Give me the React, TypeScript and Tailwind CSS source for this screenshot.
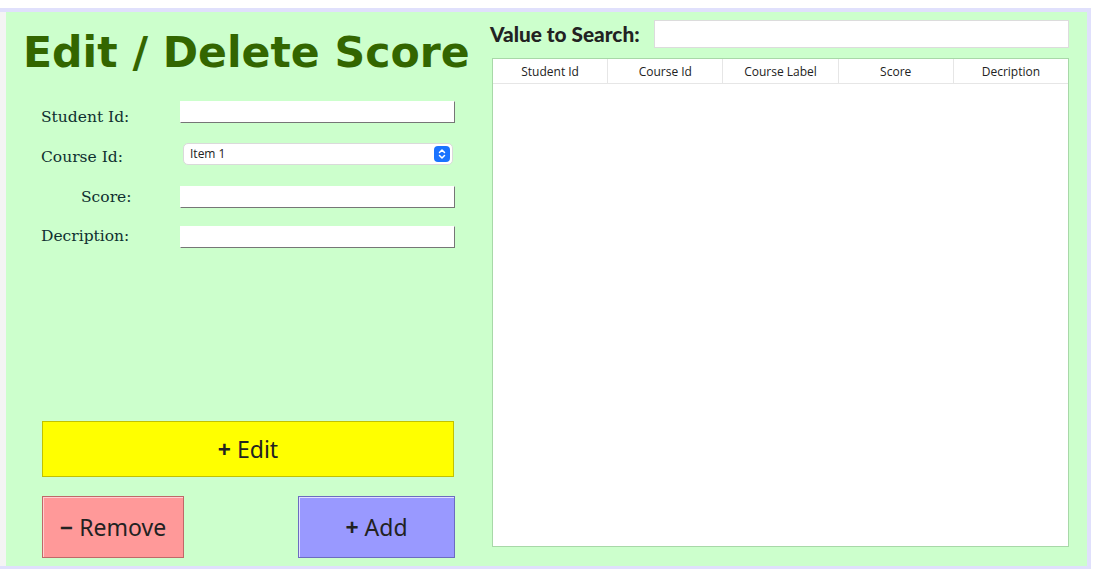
import React from 'react';

const columns = ['Student Id', 'Course Id', 'Course Label', 'Score', 'Decription'];

const fieldInput =
  'h-[22px] w-[275px] bg-white border border-t-white border-l-white border-b-[#767676] border-r-[#767676] outline-none';

export default function App() {
  return (
    <div className="w-[1105px] h-[580px] bg-white">
      <div className="mt-[8px] w-[1091px] h-[561px] bg-[#e0e0fc] pt-[4px] pr-[4px] pb-[3px]">
        <div className="flex h-full border-l-[6px] border-[#f4f4f4] bg-[#ccffcc]">
          {/* left: form */}
          <div className="flex w-[484px] flex-col pl-[17px] pt-[14px] pb-[8px]">
            <h1 className="h-[52px] font-['DejaVu_Sans',sans-serif] text-[42.6px] font-bold leading-[52px] text-[#336600] whitespace-nowrap">
              Edit / Delete Score
            </h1>

            <div className="mt-[23px] ml-[18px] flex flex-col font-['DejaVu_Serif',serif] text-[15.5px] text-[#0f3030]">
              <div className="flex h-[22px] items-center">
                <span className="w-[139px] pt-[12px]">Student Id:</span>
                <input className={fieldInput} />
              </div>
              <div className="mt-[20px] flex h-[22px] items-center">
                <span className="w-[142px] pt-[7px]">Course Id:</span>
                <div className="flex h-[22px] w-[270px] items-center justify-between rounded-[5px] border border-[#dadada] bg-white pl-[6px] pr-[2px]">
                  <span className="font-['Open_Sans',sans-serif] text-[12px] text-[#222]">Item 1</span>
                  <span className="flex h-[16px] w-[16px] items-center justify-center rounded-[4px] bg-[#1a73ff]">
                    <svg width="10" height="12" viewBox="0 0 10 12" fill="none" stroke="white" strokeWidth="1.5" strokeLinecap="round" strokeLinejoin="round">
                      <path d="M2.5 4.5 L5 2 L7.5 4.5" />
                      <path d="M2.5 7.5 L5 10 L7.5 7.5" />
                    </svg>
                  </span>
                </div>
              </div>
              <div className="mt-[21px] flex h-[22px] items-center">
                <span className="w-[139px] pl-[40px] pt-[2px]">Score:</span>
                <input className={fieldInput} />
              </div>
              <div className="mt-[18px] flex h-[22px] items-center">
                <span className="w-[139px]">Decription:</span>
                <input className={fieldInput} />
              </div>
            </div>

            <div className="mt-auto ml-[19px] flex flex-col font-['Noto_Sans',sans-serif] text-[23px] text-[#222]">
              <button className="flex h-[56px] w-[412px] items-center justify-center border border-[#c2c200] bg-[#ffff00]">
                <span className="font-bold mr-[6px]">+</span>Edit
              </button>
              <div className="mt-[19px] flex w-[413px] justify-between">
                <button className="flex h-[62px] w-[142px] items-center justify-center border border-[#c06868] bg-[#ff9999] shadow-[inset_1px_1px_0_#ffd0d0]">
                  <span className="font-bold mr-[6px]">−</span>Remove
                </button>
                <button className="flex h-[62px] w-[157px] items-center justify-center border border-[#6c6cc0] bg-[#9999ff] shadow-[inset_1px_1px_0_#e0e0ff]">
                  <span className="font-bold mr-[6px]">+</span>Add
                </button>
              </div>
            </div>
          </div>

          {/* right: search + table */}
          <div className="flex flex-1 flex-col pr-[18px] pt-[8px] pb-[19px]">
            <div className="flex h-[28px] items-center">
              <span className="w-[164px] font-['Lato',sans-serif] text-[20.8px] font-black text-[#222]">
                Value to Search:
              </span>
              <input className="h-[28px] flex-1 border border-[#dcdcdc] bg-white outline-none" />
            </div>
            <div className="mt-[10px] ml-[2px] flex flex-1 flex-col border border-[#a8d8a8] bg-white">
              <div className="flex h-[25px] border-b border-[#e6e6e6]">
                {columns.map((c, i) => (
                  <div
                    key={c}
                    className={`flex flex-1 items-center justify-center pt-[2px] font-['Open_Sans',sans-serif] text-[12px] text-[#222] ${
                      i < columns.length - 1 ? 'border-r border-[#e6e6e6]' : ''
                    }`}
                  >
                    {c}
                  </div>
                ))}
              </div>
            </div>
          </div>
        </div>
      </div>
    </div>
  );
}
